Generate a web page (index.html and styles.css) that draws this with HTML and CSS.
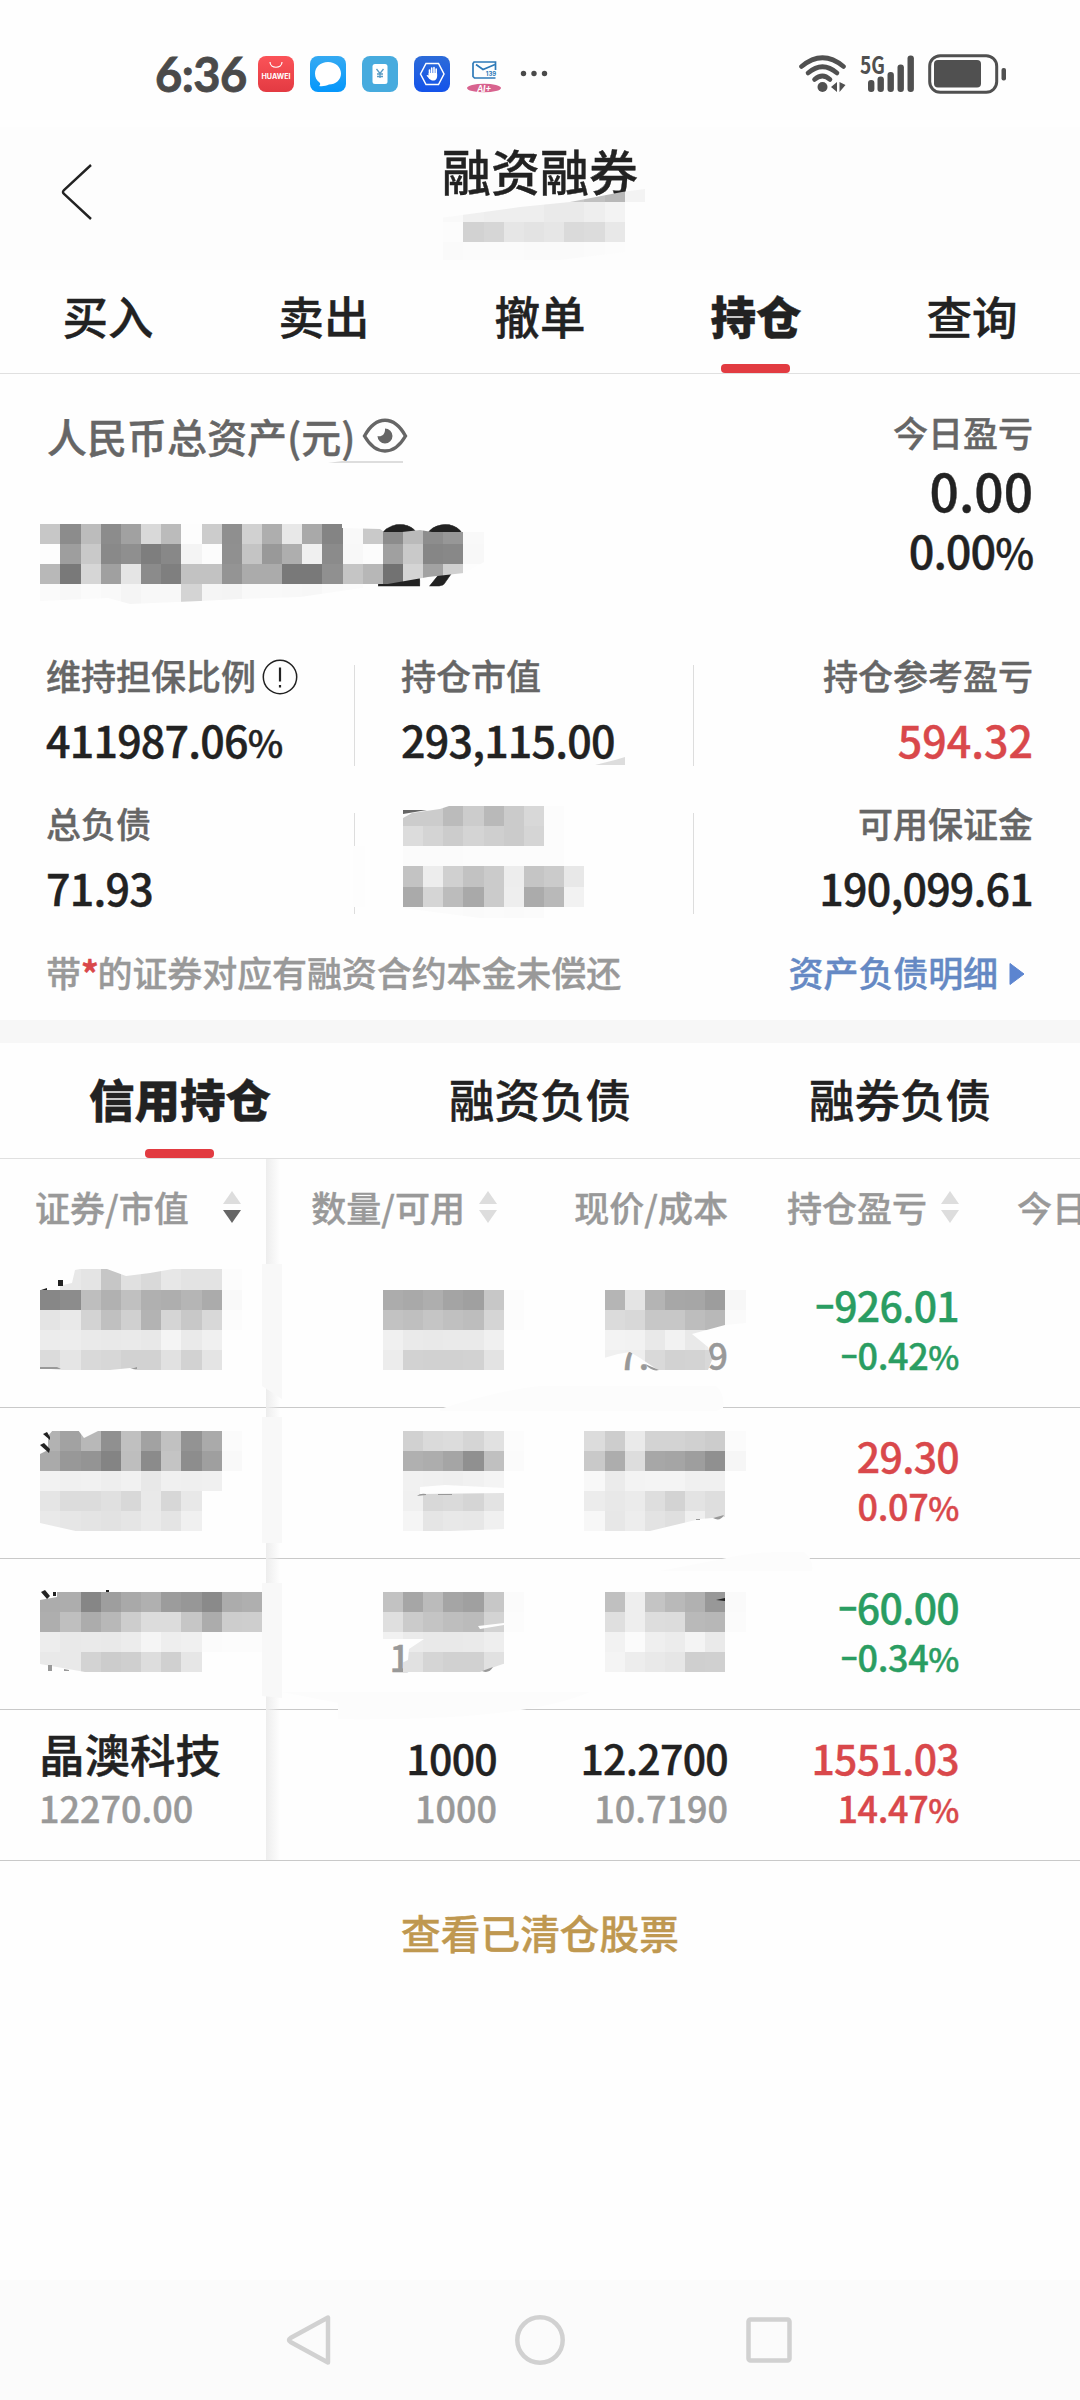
FILE: index.html
```html
<!DOCTYPE html>
<html lang="zh">
<head>
    <meta charset="UTF-8">
    <meta name="viewport" content="width=device-width, initial-scale=1.0">
    <title>融资融券</title>
    <link rel="stylesheet" href="styles.css">
</head>
<body>
<div class="page">
    <!-- 状态栏 -->
    <div class="status">
        <span class="time">6:36</span>
        <svg class="apps" width="290" height="38" viewBox="258 55 290 38">
            <defs>
                <linearGradient id="red" x1="0" y1="0" x2="0" y2="1"><stop offset="0" stop-color="#fb5358"/><stop offset="1" stop-color="#e33a42"/></linearGradient>
                <linearGradient id="sky" x1="0" y1="0" x2="0" y2="1"><stop offset="0" stop-color="#35aaf2"/><stop offset="1" stop-color="#0597fb"/></linearGradient>
                <linearGradient id="blue" x1="0" y1="0" x2="0" y2="1"><stop offset="0" stop-color="#2c6bd8"/><stop offset="1" stop-color="#1453ea"/></linearGradient>
            </defs>
            <rect x="258" y="56" width="36" height="36" rx="8" fill="url(#red)"/>
            <path d="M270 62c0 7 12 7 12 0" fill="none" stroke="#fff" stroke-width="1.2"/>
            <text x="276" y="79" class="hw" textLength="29" lengthAdjust="spacingAndGlyphs">HUAWEI</text>
            <rect x="310" y="56" width="36" height="36" rx="8" fill="url(#sky)"/>
            <path d="M328 62c7.500 0 13 5 13 11.500S335.500 84.500 329 84.500c-3 1.500-6.500 2-10 1.500 1.500-1 1.500-2.500.5-3.500-3-2-4.500-5-4.500-9C315 67 320.500 62 328 62z" fill="#fff"/>
            <rect x="362" y="56" width="36" height="36" rx="8" fill="#47abde"/>
            <rect x="372.500" y="64" width="15" height="20" rx="2.500" fill="#fff"/>
            <path d="M376.500 69l3.500 4.500 3.500-4.500M380 73.500V78M377 74h6M377 76.500h6" stroke="#5a9cc4" stroke-width="1.300" fill="none"/>
            <rect x="414" y="56" width="36" height="36" rx="8" fill="url(#blue)"/>
            <path d="M426 63.500h12.500l5.500 10.500-5.500 10.500H426L420.500 74z" fill="none" stroke="#fff" stroke-width="1.500"/>
            <path d="M429.500 78V70M431.700 75v-7M434 75v-7.500M436.200 75v-6" stroke="#fff" stroke-width="1.600" stroke-linecap="round"/>
            <path d="M428.700 73l8.300 0c.5 3 .3 7-3 7.500-4 .5-5-2.500-7.500-5 1-1 1.700-.5 2.200.2z" fill="#fff"/>
            <path d="M495.500 70v-8h-21.500l-1 1.500V76.500l1.500 1.500h21" fill="none" stroke="#2e7ab8" stroke-width="1.700"/>
            <path d="M476 64.500l7 5 12-5" fill="none" stroke="#2e7ab8" stroke-width="1.700"/>
            <text x="491" y="75.500" class="mail">139</text>
            <ellipse cx="484" cy="88" rx="17" ry="4.300" fill="#d8638f"/>
            <text x="484" y="91.500" class="ai">AI+</text>
            <g fill="#4a4a4a"><circle cx="523.500" cy="73.500" r="2.700"/><circle cx="534" cy="73.500" r="2.700"/><circle cx="544.500" cy="73.500" r="2.700"/></g>
        </svg>
        <svg class="signals" width="210" height="42" viewBox="798 52 210 42">
            <g fill="none" stroke="#505050" stroke-width="4.600" stroke-linecap="round">
                <path d="M801.500 65.500Q822.500 48 843.500 65.500"/>
                <path d="M808 72Q822.500 59.500 837 72"/>
                <path d="M814.500 78.500Q822.500 71.500 830 78.500"/>
            </g>
            <g fill="#505050">
                <circle cx="822.500" cy="86" r="5"/>
                <path d="M831 86l6-5v10zM839.500 81l6 3-6 7z"/>
                <text x="860" y="73" class="net" textLength="25" lengthAdjust="spacingAndGlyphs">5G</text>
                <rect x="868" y="79" width="6.400" height="12" rx="3"/>
                <rect x="877.500" y="75.500" width="6.400" height="15.500" rx="3"/>
                <rect x="887.500" y="71" width="6.400" height="20" rx="3"/>
                <rect x="897.500" y="63.500" width="6.400" height="27.500" rx="3"/>
                <rect x="907.500" y="54.500" width="6.400" height="36.500" rx="3"/>
                <rect x="934" y="59" width="47" height="27.500" rx="4"/>
                <rect x="1001.500" y="67" width="4.500" height="12.500" rx="2"/>
            </g>
            <rect x="929.700" y="54.700" width="67" height="36.600" rx="10.500" fill="none" stroke="#505050" stroke-width="3"/>
        </svg>
    </div>

    <!-- 标题 -->
    <div class="header">
        <svg class="back" width="32" height="58" viewBox="0 0 32 58"><path d="M30 2L3 27q-2 2 0 4L30 56" fill="none" stroke="#222" stroke-width="2.400"/></svg>
        <h1>融资融券</h1>
    </div>

    <div class="tabs">
        <div class="tab">买入</div>
        <div class="tab">卖出</div>
        <div class="tab">撤单</div>
        <div class="tab active">持仓</div>
        <div class="tab">查询</div>
    </div>

    <!-- 资产 -->
    <div class="summary">
        <div class="assets">
            <div>
                <div class="total-label">人民币总资产(元)
                    <svg width="46" height="36" viewBox="0 0 46 36">
                        <path d="M2.500 18C14-3 32-3 43.500 18 32 38 14 38 2.500 18z" fill="none" stroke="#666" stroke-width="3.400"/>
                        <path d="M23 10.500a7.500 7.500 0 1 1-7.500 7.500c3.500 1 8-1 7.500-7.500z" fill="#666"/>
                    </svg>
                </div>
                <div class="total">29</div>
            </div>
            <div class="today">
                <div class="label">今日盈亏</div>
                <div class="today-num">0.00</div>
                <div class="today-pct">0.00<small>%</small></div>
            </div>
        </div>
        <div class="stats">
            <div class="stat">
                <div class="label">维持担保比例
                    <svg width="36" height="36" viewBox="0 0 36 36"><circle cx="18" cy="18" r="16.700" fill="none" stroke="#222" stroke-width="1.500"/><path d="M18 8.500v14M18 26v2.500" stroke="#222" stroke-width="2.200"/></svg>
                </div>
                <div class="value">411987.06<small>%</small></div>
            </div>
            <div class="stat">
                <div class="label">持仓市值</div>
                <div class="value">293,115.00</div>
            </div>
            <div class="stat">
                <div class="label">持仓参考盈亏</div>
                <div class="value wide up">594.32</div>
            </div>
            <div class="stat">
                <div class="label">总负债</div>
                <div class="value">71.93</div>
            </div>
            <div class="stat"></div>
            <div class="stat">
                <div class="label">可用保证金</div>
                <div class="value">190,099.61</div>
            </div>
        </div>
        <div class="note">
            <span>带<b>*</b>的证券对应有融资合约本金未偿还</span>
            <a>资产负债明细<svg width="16" height="24" viewBox="0 0 16 24"><path d="M1 1.500v21L15 12z" fill="#5c85d0" stroke="#5c85d0" stroke-linejoin="round"/></svg></a>
        </div>
    </div>

    <div class="tabs sub">
        <div class="tab active">信用持仓</div>
        <div class="tab">融资负债</div>
        <div class="tab">融券负债</div>
    </div>

    <!-- 持仓列表 -->
    <div class="table">
        <div class="row head">
            <div>证券/市值<i class="sort desc"></i></div>
            <div>数量/可用<i class="sort"></i></div>
            <div>现价/成本</div>
            <div>持仓盈亏<i class="sort"></i></div>
            <div>今日</div>
        </div>
        <div class="row">
            <div></div>
            <div></div>
            <div class="cost"><p>&nbsp;</p><p class="part"><span>7.</span><span>9</span></p></div>
            <div class="down"><p><s>−</s>926.01</p><p><s>−</s>0.42<small>%</small></p></div>
            <div></div>
        </div>
        <div class="row">
            <div></div>
            <div></div>
            <div></div>
            <div class="up"><p>29.30</p><p>0.07<small>%</small></p></div>
            <div></div>
        </div>
        <div class="row">
            <div></div>
            <div class="qty"><p>&nbsp;</p><p class="part">1</p></div>
            <div></div>
            <div class="down"><p><s>−</s>60.00</p><p><s>−</s>0.34<small>%</small></p></div>
            <div></div>
        </div>
        <div class="row">
            <div class="stock"><p>晶澳科技</p><p>12270.00</p></div>
            <div class="qty"><p>1000</p><p>1000</p></div>
            <div class="cost"><p>12.2700</p><p>10.7190</p></div>
            <div class="up"><p>1551.03</p><p>14.47<small>%</small></p></div>
            <div></div>
        </div>
    </div>

    <div class="more">查看已清仓股票</div>

    <div class="navbar">
        <svg width="510" height="54" viewBox="285 2313 510 54" fill="none" stroke="#d1d1d1" stroke-width="4.500" stroke-linejoin="round">
            <path d="M328 2317.500v45L290.500 2342q-3-2 0-4z"/>
            <circle cx="540" cy="2340" r="22.700"/>
            <rect x="748.500" y="2319.500" width="41" height="41" rx="2"/>
        </svg>
    </div>

    <!-- 马赛克 -->
    <svg class="mosaic" id="mosaic" width="1080" height="2400" viewBox="0 0 1080 2400"></svg>
</div>
<script src="mosaic.js"></script>
</body>
</html>
```
FILE: mosaic.js
```js
// 每块马赛克：起始列、起始行、灰度值（两位十六进制，.. 表示空）、裁剪多边形
const SIZE = 20.15;
const blocks = [
    { col: 22, row: 9, rows: [
        ".. .. .. .. .. .. c8 c0 b8 f3",
        "f9 f0 ee ee ee ea ea ee f3",
        "fc d2 d6 e6 e3 e6 da dc e8",
        "fa fb fb fb fa fa fa fb fc"
    ], clip: "440,218 520,207 570,202 622,192 645,189 645,202 625,202 625,252 560,260 440,260" },
    { col: 2, row: 26, rows: [
        "c7 8c bc 8c a1 d9 bb fd cc 8f d1 ae e8 a9 84 f9 c9 8c ba 8d 97 f9",
        "fd 9e c9 89 8f 7e 88 f4 fc 90 c4 99 ae f0 8b f8 fc a0 c9 86 88 f8",
        "b8 79 d6 a0 e5 8b 7f c2 c2 94 ab ab 79 79 90 c5 b7 72 d4 a2 d0 fd",
        "fa f8 fb f9 f5 f8 f8 d4 f5 f4 f9 f9 f8 f7 fa fb"
    ], clip: "40,523 342,523 342,528 380,529 384,532 402,532 420,530 432,532 484,532 484,562 464,573 428,577 382,585 300,597 240,599 200,601 130,604 108,598 40,601" },
    { col: 20, row: 40, rows: [
        "cc cc bb cc b9 cb d8 fc",
        "dc d4 cc d4 cf cb d5 fc",
        "fb fb fb fc fc fc fc fc",
        "c3 ed d0 c2 cb ed c5 cb e8",
        "aa d5 bc a9 cb ee ab b9 f2",
        "fb fb fb fa fb fa fb"
    ], clip: "403,818 412,813 440,809 452,805 590,805 590,908 545,918 480,918 403,908" },
    { col: 2, row: 63, rows: [
        ".. e8 e4 c6 e0 d9 e7 e3 e3 fc",
        "87 8c be b1 c0 b0 ae b5 ab f9",
        "e4 e9 d3 c0 d0 b3 d5 c8 d8 fc",
        "ec ed ea e9 ea e8 f4 ea f0",
        "db e5 d9 d7 d2 d2 e1 d2 e4"
    ], clip: "40,1290 72,1283 75,1270 80,1269 107,1269 126,1276 150,1273 173,1269 245,1269 245,1371 138,1371 130,1368 110,1370 62,1370 40,1368" },
    { col: 19, row: 64, rows: [
        "ac a9 ae a4 a0 c7 fc", "c2 bf c5 c0 bd d5 fc", "f0 ea e9 ea ea f0", "ec d2 d1 d1 d2 e3"
    ] },
    { col: 30, row: 64, rows: [
        "b5 e4 b4 a7 a6 9d f7", "db d8 c7 c7 bd b8 fa", "f3 f2 e9 f2 e9 ec", "f0 ee d9 d2 d3 d8"
    ], clip: "604,1288 746,1288 746,1323 725,1325 692,1334 708,1347 712,1360 708,1370 658,1370 640,1358 630,1352 618,1354 604,1358" },
    { col: 2, row: 71, rows: [
        "b2 a2 b8 90 c0 a2 c1 93 aa fb",
        "aa 98 94 84 be 8b c4 8d 9f f9",
        "f2 f0 f1 ee f1 e8 f0 ef f0",
        "e5 dc dc e0 d8 e9 d7 e8",
        "e9 e6 e4 e2 e5 ea e4 f0"
    ], clip: "40,1454 48,1450 48,1436 53,1430 78,1430 84,1438 100,1430 245,1430 245,1532 80,1532 40,1523" },
    { col: 20, row: 71, rows: [
        "d1 da dc d5 e1 fc", "b0 ad a5 90 c0 fb", "f1 f0 ef f1 f4", "f0 d8 da d5 e3", "f5 e5 e8 e7 f0"
    ], clip: "403,1430 525,1430 525,1489 445,1485 420,1487 420,1494 505,1493 505,1529 450,1531 403,1531" },
    { col: 29, row: 71, rows: [
        "dc cd ea d3 d3 d0 cc fb", "c9 ad dd a7 a5 9e 90 f6", "f8 eb f3 f4 f4 f0 f0", "ec e8 eb de d3 e3 de", "f7 e7 ed e3 df ef df"
    ], clip: "584,1430 746,1430 746,1500 725,1517 700,1519 650,1531 584,1531" },
    { col: 2, row: 79, rows: [
        "ac ad 86 9e a9 b0 9c 97 8a ac af",
        "ae bf ac b8 cd dc dc c6 ac cd ce",
        "ed e9 ea e9 ec f5 ee f0 fb fc fc",
        "e9 e9 d3 cc cf dd d0 e6"
    ], clip: "40,1600 57,1597 57,1591 263,1591 263,1672 85,1672 40,1664" },
    { col: 19, row: 79, rows: [
        "c2 a6 bb a5 a0 c7 fb", "df cb c4 be bb d3 fc", "f1 eb e9 e9 ea ee", ".. e1 d5 d1 d1 e1"
    ], clip: "383,1591 525,1591 525,1660 503,1664 480,1672 383,1672 408,1660 409,1649 424,1639 383,1639" },
    { col: 30, row: 79, rows: [
        "c0 ee c4 b9 b1 98 fa", "df ee dd dc b9 b7 fb", "f2 fb ef ec f4 ea", "f4 ed e9 e6 cf d0"
    ] }
];

// 涂抹的浅色痕迹，会盖住一部分分隔线和阴影
const smears = [
    ["#fcfcfc", "M440 1409Q500 1390 540 1386H716q9 8 7 22l-7 3H440z"],
    ["#fcfcfc", "M722 1559Q760 1550 804 1552q10 8 8 19H660z"],
    ["#fcfcfc", "M282 1692H590Q520 1722 338 1719V1703z"],
    ["#f8f8f8", "M262 1264h20v135l-20-13z"],
    ["#f8f8f8", "M262 1417h20v126h-20z"],
    ["#f8f8f8", "M262 1583h20v115l-20-2z"],
    ["#fdfdfd", "M353 846h12v61h-12z"]
];

// 没有完全遮住的笔画
const marks = [
    ["#dddddd", "M328 463l14-2h61v2z"],
    ["#dddddd", "M595 765l20-5 10-3v8z"],
    ["#666666", "M403 810h24l-12 2-12 2z"],
    ["#222222", "M58 1280h5v6h-5zM41 1290l6-2v2z"],
    ["#999999", "M40 1367h17l4 2H40zM131 1369l6-2v2z"],
    ["#222222", "M43 1434l4-2 3 5v3zM40 1445l4-2 6 6-1 4z"],
    ["#222222", "M41 1592l4-2 5 6-3 3zM53 1592h3v4h-3zM106 1590h3v2h-3z"],
    ["#999999", "M48 1665h4v6h-4zM64 1669l5 1v1h-5z"],
    ["#999999", "M417 1496q3-3 9-2v1zM438 1494h14v1h-14zM645 1364q7 8 14 6zM696 1519h4v1h-4zM713 1518l11-3q-4 7-11 3zM482 1671l11-4q-4 7-11 4z"],
    ["#fefefe", "M478 1626l26-3v2l-24 4z"],
    ["#222222", "M716 1600l9-2v3z"]
];

const svg = document.getElementById("mosaic");

function add(tag, attrs, parent) {
    const el = document.createElementNS("http://www.w3.org/2000/svg", tag);
    for (const key in attrs) el.setAttribute(key, attrs[key]);
    parent.appendChild(el);
    return el;
}

smears.forEach(([fill, d]) => add("path", { d, fill }, svg));

blocks.forEach((block, n) => {
    const g = add("g", { "shape-rendering": "crispEdges" }, svg);
    if (block.clip) {
        const clip = add("clipPath", { id: "clip" + n }, svg);
        add("polygon", { points: block.clip }, clip);
        g.setAttribute("clip-path", `url(#clip${n})`);
    }
    block.rows.forEach((line, r) => {
        line.split(" ").forEach((v, c) => {
            if (v === "..") return;
            add("rect", {
                x: (block.col + c) * SIZE,
                y: (block.row + r) * SIZE,
                width: SIZE,
                height: SIZE,
                fill: "#" + v + v + v
            }, g);
        });
    });
});

marks.forEach(([fill, d]) => add("path", { d, fill }, svg));
```
FILE: styles.css
```css
* {
    box-sizing: border-box;
}

body {
    margin: 0;
    background: #fefefe;
    color: #222;
    font-family: "Noto Sans CJK SC", sans-serif;
    font-weight: 500;
    -webkit-text-stroke: 0.4px;
}

p {
    margin: 0;
}

small {
    font-size: 92%;
}

/* 负号收窄一点 */
s {
    display: inline-block;
    text-decoration: none;
    transform: scaleX(0.8);
    transform-origin: right;
}

.page {
    position: relative;
    width: 1080px;
    height: 2400px;
    display: flex;
    flex-direction: column;
    overflow: hidden;
}

/* 状态栏 */
.status {
    height: 127px;
    padding: 21px 72px 0 155px;
    display: flex;
    align-items: center;
    -webkit-text-stroke: 0;
}

.time {
    width: 103px;
    font-family: Lato, sans-serif;
    font-weight: 700;
    font-size: 47px;
    line-height: 60px;
    letter-spacing: -0.5px;
    color: #4a4a4a;
    -webkit-text-stroke: 0.8px;
}

.signals {
    margin-left: auto;
}

.hw {
    font: bold 7px Inter, sans-serif;
    fill: #fff;
    text-anchor: middle;
}

.mail {
    font: bold 6px Inter, sans-serif;
    fill: #2e7ab8;
    text-anchor: middle;
}

.ai {
    font: italic 900 9px Lato, sans-serif;
    fill: #fff;
    text-anchor: middle;
}

.net {
    font: bold 24px "Noto Sans CJK SC", sans-serif;
}

/* 标题 */
.header {
    height: 143px;
    padding-top: 13px;
    display: grid;
    grid-template-columns: 120px 1fr 120px;
    background: #fdfdfd;
}

.back {
    margin: 23px 0 0 61px;
}

h1 {
    margin: 0;
    font-size: 49px;
    font-weight: 500;
    line-height: 60px;
    text-align: center;
}

/* 标签页 */
.tabs {
    display: flex;
    height: 104px;
    border-bottom: 1px solid #e0e0e0;
}

.tab {
    position: relative;
    flex: 1;
    text-align: center;
    font-size: 45.5px;
    line-height: 90px;
}

.tab.active {
    font-weight: 900;
}

.tab.active::after {
    content: "";
    position: absolute;
    left: 50%;
    bottom: 0;
    width: 69px;
    height: 9px;
    margin-left: -35px;
    border-radius: 4px;
    background: #e23b41;
}

.tabs.sub {
    height: 116px;
}

.sub .tab {
    line-height: 111px;
}

/* 资产 */
.summary {
    height: 669px;
    padding: 32px 47px 0 46px;
    border-bottom: 23px solid #f7f7f7;
}

.assets {
    display: flex;
    justify-content: space-between;
    height: 244px;
}

.total-label {
    display: flex;
    align-items: center;
    gap: 7px;
    margin-top: 5px;
    padding-left: 1px;
    font-size: 40px;
    line-height: 50px;
    color: #666;
}

.total {
    padding-left: 329px;
    margin-top: 43px;
    font-family: Lato, sans-serif;
    font-weight: 700;
    font-size: 84px;
    line-height: 100px;
    letter-spacing: -3px;
}

.today {
    text-align: right;
}

.label {
    font-size: 35px;
    line-height: 50px;
    color: #666;
}

.today .label {
    padding-top: 1px;
}

.label svg {
    margin-left: -2px;
    vertical-align: -5px;
}

.today-num {
    font-size: 51.5px;
    line-height: 66px;
}

.today-pct {
    font-size: 45px;
    line-height: 54px;
    letter-spacing: -1px;
}

.stats {
    display: grid;
    grid-template-columns: 308px 339px 1fr;
    grid-auto-rows: 148px;
}

.stat {
    position: relative;
}

.stat:nth-child(3n+2) {
    padding-left: 47px;
}

.stat:nth-child(3n) {
    text-align: right;
}

.stat:not(:nth-child(3n+1))::before {
    content: "";
    position: absolute;
    left: 0;
    top: 15px;
    width: 1px;
    height: 101px;
    background: #ddd;
}

.value {
    margin-top: 9px;
    font-size: 43px;
    line-height: 60px;
    letter-spacing: -0.8px;
}

.value.wide {
    letter-spacing: 0;
}

.value small {
    font-size: 88%;
}

.up {
    color: #d9484b;
}

.down {
    color: #2a9d62;
}

.note {
    display: flex;
    justify-content: space-between;
    padding-top: 1px;
    font-size: 35px;
    line-height: 50px;
    letter-spacing: -0.1px;
    color: #999;
}

.note b {
    margin-right: -1px;
    color: #d9484b;
}

.note a {
    padding-right: 8px;
    color: #6589c4;
}

.note a svg {
    margin-left: 11px;
    vertical-align: 1px;
}

/* 持仓列表 */
.table {
    position: relative;
}

.table::after {
    content: "";
    position: absolute;
    left: 266px;
    top: 0;
    bottom: 1px;
    width: 14px;
    background: linear-gradient(to right, #ededed, rgba(254, 254, 254, 0));
}

.row {
    display: grid;
    grid-template-columns: 266px 231px 231px 231px 1fr;
    height: 151px;
    padding-top: 22px;
    border-bottom: 1px solid #c9c9c9;
    text-align: right;
    font-size: 41px;
    line-height: 50px;
    letter-spacing: -0.7px;
}

.row p + p {
    font-size: 36px;
    letter-spacing: 0;
}

.row .up p + p,
.row .down p + p {
    letter-spacing: -0.4px;
}

.row .stock {
    margin-top: -4px;
    padding-left: 39px;
    text-align: left;
    font-size: 45.5px;
    letter-spacing: 0;
}

.stock p + p {
    margin-top: 4px;
}

.stock p + p,
.qty p + p,
.cost p + p {
    color: #999;
}

.cost .part {
    display: flex;
    justify-content: space-between;
    padding-left: 121px;
}

.qty .part {
    padding-right: 87px;
}

.head {
    height: 98px;
    padding: 0;
    border: 0;
    font-size: 35px;
    line-height: 92px;
    letter-spacing: 0;
    color: #999;
}

.head div {
    display: flex;
    align-items: center;
    justify-content: flex-end;
    gap: 14px;
    height: 96px;
    white-space: nowrap;
}

.head div:first-child {
    justify-content: space-between;
    padding: 0 25px 0 35px;
}

.head div:last-child {
    justify-content: flex-start;
    padding-left: 58px;
}

.sort::before,
.sort::after {
    content: "";
    display: block;
    border: 9px solid transparent;
    border-top-width: 0;
    border-bottom: 13px solid #ddd;
}

.sort::after {
    margin-top: 6px;
    border-top: 13px solid #ddd;
    border-bottom: 0;
}

.sort.desc::after {
    border-top-color: #666;
}

.more {
    padding-top: 41px;
    text-align: center;
    font-size: 39.7px;
    line-height: 60px;
    color: #bf9850;
}

.navbar {
    height: 120px;
    margin-top: auto;
    padding: 33px 285px 0;
    background: #fbfbfb;
}

.mosaic {
    position: absolute;
    left: 0;
    top: 0;
}
```
